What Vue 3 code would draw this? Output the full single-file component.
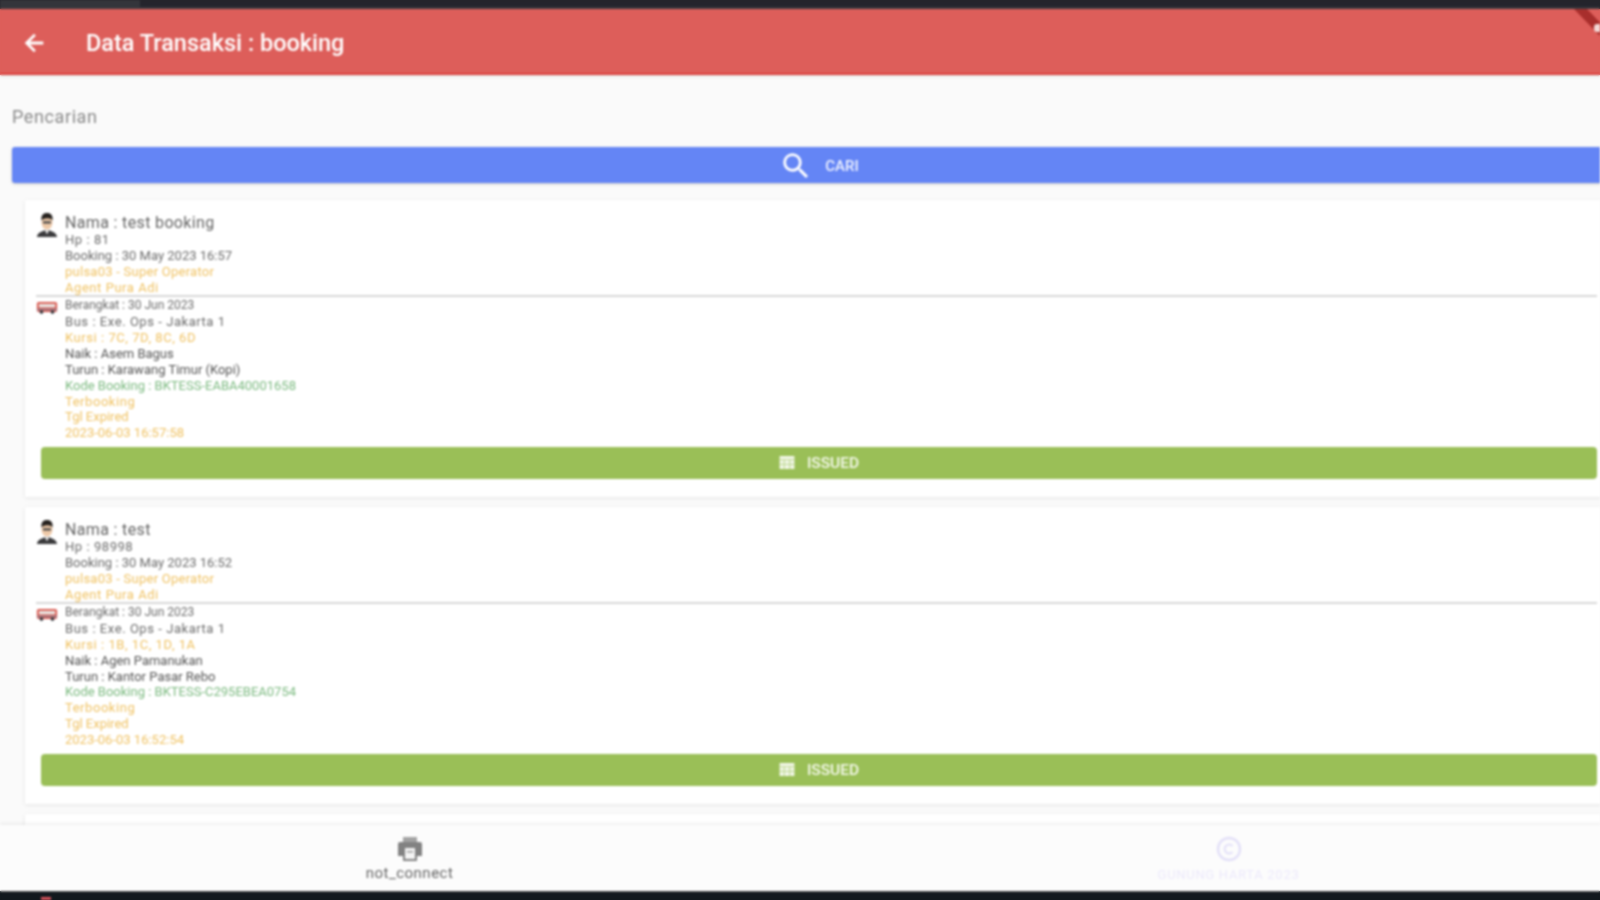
<template>
  <div class="frame">
    <div class="top-strip"><div class="top-strip-left"></div></div>

    <div class="page">
      <!-- Header -->
      <header class="appbar">
        <svg class="back-icon" viewBox="0 0 24 24"><path d="M20 10.7H8.6l5-5L12 4l-8 8 8 8 1.6-1.7-5-5H20z" /></svg>
        <h1 class="appbar-title">Data Transaksi : booking</h1>
      </header>

      <main class="content">
        <p class="search-label">Pencarian</p>
        <button class="search-btn">
          <svg class="search-icon" viewBox="0 0 24 24"><path d="M15.5 14h-.79l-.28-.27A6.47 6.47 0 0 0 16 9.5 6.5 6.5 0 1 0 9.5 16c1.61 0 3.09-.59 4.23-1.57l.27.28v.79l5 4.99L20.49 19l-4.99-5zm-6 0C7.01 14 5 11.99 5 9.5S7.01 5 9.5 5 14 7.01 14 9.5 11.99 14 9.5 14z" /></svg>
          <span>CARI</span>
        </button>

        <!-- Liste des transaksi -->
        <section v-for="item in bookings" :key="item.name" class="card">
          <div class="row row-top">
            <svg class="row-icon person" viewBox="0 0 24 28">
              <path d="M1 27c1-5 6-6 8-7h6c2 1 7 2 8 7z" fill="#3a3a3c" />
              <path d="M10 20h4l-2 4z" fill="#fff" />
              <ellipse cx="12" cy="11" rx="6" ry="8" fill="#eec9a8" />
              <path d="M6 9c-1-6 3-8 6-8s7 2 6 8c-2-3-9-3-12 0z" fill="#26221f" />
              <rect x="7.5" y="10" width="9" height="2.4" rx="1" fill="#4a4a4a" />
            </svg>
            <div class="row-text">
              <p class="name">Nama : {{ item.name }}</p>
              <p class="wide">Hp : {{ item.hp }}</p>
              <p>Booking : {{ item.booked }}</p>
              <p class="yellow operator">pulsa03 - Super Operator</p>
              <p class="yellow wide">Agent Pura Adi</p>
            </div>
          </div>
          <div class="divider"></div>
          <div class="row">
            <svg class="row-icon bus" viewBox="0 0 24 16">
              <rect x="1" y="2" width="22" height="11" rx="2" fill="#d9534a" />
              <rect x="3" y="4" width="18" height="4" fill="#e8e3e0" />
              <rect x="1" y="9.5" width="22" height="1.5" fill="#8c8fa0" />
              <circle cx="6" cy="13" r="2" fill="#33343a" />
              <circle cx="18" cy="13" r="2" fill="#33343a" />
            </svg>
            <div class="row-text">
              <p class="depart">Berangkat : {{ item.depart }}</p>
              <p class="wide">Bus : Exe. Ops - Jakarta 1</p>
              <p class="yellow wide">Kursi : {{ item.seats }}</p>
              <p class="dark">Naik : {{ item.naik }}</p>
              <p class="dark">Turun : {{ item.turun }}</p>
              <p class="green">Kode Booking : {{ item.code }}</p>
              <p class="yellow wide">Terbooking</p>
              <p class="yellow">Tgl Expired</p>
              <p class="yellow">{{ item.expired }}</p>
            </div>
          </div>
          <button class="issued-btn">
            <svg class="issued-icon" viewBox="0 0 16 14">
              <path d="M0 0h16v14H0z" fill="#f2f7e8" />
              <path d="M0 4h16M0 9h16M5 4v10M11 4v10" stroke="#b9d488" stroke-width="1" />
            </svg>
            <span>ISSUED</span>
          </button>
        </section>

        <section class="card"></section>
      </main>

      <!-- Navigation du bas -->
      <footer class="bottom-nav">
        <div class="nav-item">
          <svg class="nav-icon" viewBox="0 0 28 28">
            <path d="M7 2h14v5H7z" fill="#a3a3a3" />
            <path d="M4 7h20a2 2 0 0 1 2 2v12h-5v5H7v-5H2V9a2 2 0 0 1 2-2z" fill="#828282" />
            <path d="M9 13h10v11H9z" fill="#f4f4f4" />
            <path d="M11 16h6v1.5h-6z" fill="#9a9a9a" />
          </svg>
          <span class="nav-label">not_connect</span>
        </div>
        <div class="nav-item faint">
          <svg class="nav-icon" viewBox="0 0 28 28">
            <circle cx="14" cy="14" r="11" fill="none" stroke="#e3e0f8" stroke-width="2.4" />
            <path d="M17.5 11a4.5 4.5 0 1 0 0 6" fill="none" stroke="#e3e0f8" stroke-width="2" />
          </svg>
          <span class="nav-label">GUNUNG HARTA 2023</span>
        </div>
      </footer>
    </div>

    <div class="bottom-strip"><i class="taskbar-dot"></i></div>
    <div class="corner-ribbon"></div>
    <div class="corner-dot"></div>
  </div>
</template>

<script setup>
import { ref } from "vue";

const bookings = ref([
  {
    name: "test booking",
    hp: "81",
    booked: "30 May 2023 16:57",
    depart: "30 Jun 2023",
    seats: "7C, 7D, 8C, 6D",
    naik: "Asem Bagus",
    turun: "Karawang Timur (Kopi)",
    code: "BKTESS-EABA40001658",
    expired: "2023-06-03 16:57:58",
  },
  {
    name: "test",
    hp: "98998",
    booked: "30 May 2023 16:52",
    depart: "30 Jun 2023",
    seats: "1B, 1C, 1D, 1A",
    naik: "Agen Pamanukan",
    turun: "Kantor Pasar Rebo",
    code: "BKTESS-C295EBEA0754",
    expired: "2023-06-03 16:52:54",
  },
]);
</script>

<style>
html,
body {
  margin: 0;
  overflow: hidden;
}

/* Same bands as the screen, so the blur has no dark edge on the sides */
html {
  background: linear-gradient(
    #24242c 0 9px,
    #dd5e5a 9px 75px,
    #fafafa 75px 825px,
    #fcfcfc 825px 891px,
    #12181e 891px
  );
}
</style>

<style scoped>
.frame {
  position: relative;
  display: flex;
  flex-direction: column;
  width: 1600px;
  height: 900px;
  overflow: hidden;
  font-family: Roboto, "Liberation Sans", sans-serif;
  filter: blur(0.9px);
}

.top-strip {
  flex: none;
  height: 9px;
  background: #24242c;
  border-bottom: 2px solid #3a3b40;
  box-sizing: border-box;
}

.top-strip-left {
  width: 140px;
  height: 7px;
  background: #34353b;
}

/* Page plus large que la fenetre */
.page {
  flex: 1;
  display: flex;
  flex-direction: column;
  width: 1638px;
  min-height: 0;
  background: #fafafa;
}

.appbar {
  flex: none;
  display: flex;
  align-items: center;
  height: 66px;
  box-sizing: border-box;
  padding: 3px 0 0 20px;
  background: #dd5e5a;
  border-bottom: 2px solid #dc413d;
  box-shadow: 0 1px 3px rgba(0, 0, 0, 0.12);
}

.back-icon {
  width: 28px;
  height: 28px;
  fill: #fff;
}

.appbar-title {
  margin: 0 0 0 38px;
  font-size: 23.5px;
  font-weight: 500;
  color: #fff;
}

.content {
  flex: 1;
  min-height: 0;
  overflow: hidden;
  padding: 0 12px;
}

.search-label {
  margin: 32px 0 20px;
  font-size: 18px;
  line-height: 20px;
  letter-spacing: 0.6px;
  color: #8a8a8a;
}

.search-btn {
  display: flex;
  align-items: center;
  justify-content: center;
  gap: 12px;
  width: 100%;
  height: 36px;
  padding: 1px 0 0;
  border: none;
  border-radius: 3px;
  background: #6485f5;
  color: #f1f4ff;
  font: 500 15px Roboto, sans-serif;
  box-shadow: 0 1px 3px rgba(0, 0, 0, 0.2);
}

.search-icon {
  width: 34px;
  height: 34px;
  fill: #fff;
}

.card {
  margin: 17px 13px 10px;
  padding: 13px 16px 18px 11px;
  background: #fff;
  box-shadow: 0 1px 4px rgba(0, 0, 0, 0.09);
}

.card + .card {
  margin-top: 10px;
}

.row {
  display: flex;
  gap: 7px;
}

.row-top {
  margin-bottom: -0.5px;
}

.row-icon {
  flex: none;
  width: 22px;
}

.person {
  height: 26px;
  margin-top: -1px;
}

.bus {
  height: 15px;
  margin-top: 2px;
}

.row-text p {
  margin: 0;
  font-size: 13px;
  line-height: 15.9px;
  color: #6c6c6c;
  white-space: nowrap;
}

.row-text .name {
  font-size: 16px;
  line-height: 19px;
  letter-spacing: 0.35px;
  color: #666;
}

.row-text .depart {
  font-size: 12px;
}

.row-text .wide {
  letter-spacing: 0.55px;
}

.row-text .operator {
  letter-spacing: 0.25px;
}

.row-text .yellow {
  color: #f0c262;
}

.row-text .green {
  color: #7cba80;
}

.row-text .dark {
  color: #555;
}

.divider {
  height: 2px;
  background: #d8d8d8;
  margin-bottom: 1px;
}

.issued-btn {
  display: flex;
  align-items: center;
  justify-content: center;
  gap: 12px;
  width: calc(100% - 5px);
  height: 32px;
  margin: 5.5px 0 0 5px;
  padding: 0;
  border: none;
  border-radius: 4px;
  background: #9abf57;
  color: #f5f9ec;
  font: 500 15.5px Roboto, sans-serif;
}

.issued-icon {
  width: 16px;
  height: 13px;
}

.bottom-nav {
  flex: none;
  display: grid;
  grid-template-columns: 1fr 1fr;
  height: 66px;
  background: #fcfcfc;
  box-shadow: 0 -2px 3px rgba(0, 0, 0, 0.06);
  position: relative;
}

.nav-item {
  display: flex;
  flex-direction: column;
  align-items: center;
  padding-top: 10px;
}

.nav-icon {
  width: 28px;
  height: 28px;
}

.nav-label {
  margin-top: 1px;
  font-size: 15px;
  line-height: 18px;
  letter-spacing: 0.5px;
  color: #666;
}

.faint .nav-label {
  margin-top: 3px;
  font-size: 13px;
  letter-spacing: 0.7px;
  color: #ece9fb;
}

.bottom-strip {
  position: relative;
  flex: none;
  height: 9px;
  background: #12181e;
  border-top: 1px solid #555;
  box-sizing: border-box;
}

.taskbar-dot {
  position: absolute;
  left: 41px;
  top: 5px;
  width: 10px;
  height: 4px;
  background: #d8535c;
}

.corner-ribbon {
  position: absolute;
  top: 9px;
  right: 0;
  width: 26px;
  height: 30px;
  background: #a82e2c;
  clip-path: polygon(0 0, 50% 0, 100% 45%, 100% 90%);
}

.corner-dot {
  position: absolute;
  top: 24px;
  right: 0;
  width: 6px;
  height: 8px;
  background: #f3d8d6;
  border-radius: 3px 0 0 3px;
}
</style>
